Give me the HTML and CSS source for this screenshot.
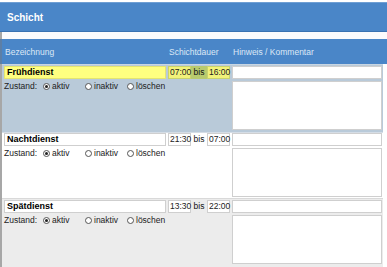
FILE: index.html
```html
<!DOCTYPE html>
<html lang="de">
<head>
  <meta charset="UTF-8">
  <title>Schicht</title>
  <link rel="stylesheet" href="styles.css">
</head>
<body>
  <div class="titlebar">Schicht</div>
  <div class="spacer"></div>

  <div class="colheads">
    <span class="col-name">Bezeichnung</span>
    <span class="col-time">Schichtdauer</span>
    <span class="col-hint">Hinweis / Kommentar</span>
  </div>

  <div class="rows">
    <div class="shift current">
      <div class="name-cell">
        <div class="field name">Frühdienst</div>
        <div class="state">
          <span class="label">Zustand:</span>
          <span class="opt"><span class="radio checked"></span>aktiv</span>
          <span class="opt"><span class="radio"></span>inaktiv</span>
          <span class="opt"><span class="radio"></span>löschen</span>
        </div>
      </div>
      <div class="time-cell">
        <div class="field time">07:00</div>
        <span class="bis">bis</span>
        <div class="field time">16:00</div>
      </div>
      <div class="hint-cell">
        <div class="field hint"></div>
        <div class="field note"></div>
      </div>
    </div>

    <div class="shift plain">
      <div class="name-cell">
        <div class="field name">Nachtdienst</div>
        <div class="state">
          <span class="label">Zustand:</span>
          <span class="opt"><span class="radio checked"></span>aktiv</span>
          <span class="opt"><span class="radio"></span>inaktiv</span>
          <span class="opt"><span class="radio"></span>löschen</span>
        </div>
      </div>
      <div class="time-cell">
        <div class="field time">21:30</div>
        <span class="bis">bis</span>
        <div class="field time">07:00</div>
      </div>
      <div class="hint-cell">
        <div class="field hint"></div>
        <div class="field note"></div>
      </div>
    </div>

    <div class="shift grey">
      <div class="name-cell">
        <div class="field name">Spätdienst</div>
        <div class="state">
          <span class="label">Zustand:</span>
          <span class="opt"><span class="radio checked"></span>aktiv</span>
          <span class="opt"><span class="radio"></span>inaktiv</span>
          <span class="opt"><span class="radio"></span>löschen</span>
        </div>
      </div>
      <div class="time-cell">
        <div class="field time">13:30</div>
        <span class="bis">bis</span>
        <div class="field time">22:00</div>
      </div>
      <div class="hint-cell">
        <div class="field hint"></div>
        <div class="field note"></div>
      </div>
    </div>
  </div>
</body>
</html>
```

FILE: styles.css
```css
body {
  margin: 0;
  background: #fff;
  font-family: "Liberation Sans", Arial, sans-serif;
  font-size: 8.5px;
  color: #111;
  overflow: hidden;
}

.titlebar {
  margin-top: 2px;
  height: 28px;
  line-height: 29px;
  padding-left: 7px;
  background: #4a86c8;
  border-top: 1px solid #6f9fd4;
  border-bottom: 1px solid #3a72b2;
  color: #fff;
  font-weight: bold;
  font-size: 10px;
}

.spacer {
  height: 7px;
  background: #fbfbfd;
  border-left: 2px solid #a7a7a7;
}

.colheads {
  display: flex;
  height: 25px;
  align-items: center;
  background: #4a86c8;
  border-left: 2px solid #5d7fa6;
  color: #dde8f6;
}

.col-name {
  width: 164px;
  padding-left: 3px;
}

.col-time {
  width: 64px;
}

.rows {
  width: 381px;
  border-left: 2px solid #a7a7a7;
}

.shift {
  display: grid;
  grid-template-columns: 162px 62px 150px;
  column-gap: 2px;
  padding: 1px 0 3px 2px;
  height: 63px;
}

.shift.current {
  background: #b9cad9;
  border-top: 1px solid #c9d6e2;
}

.shift.plain {
  background: #fff;
  border-top: 1px solid #d5dde6;
  padding-top: 0;
  height: 62px;
}

.shift.grey {
  background: #ececec;
  border-top: 1px solid #d9d9d9;
  height: 64px;
}

.field {
  box-sizing: border-box;
  border: 1px solid #cfcfcf;
  background: #fff;
  height: 13px;
  line-height: 11px;
  padding: 0 2px;
}

.name {
  font-weight: bold;
  font-size: 9px;
  color: #000;
}

.current .name {
  background: #ffff80;
  border-color: #e4e470;
}

.state {
  display: flex;
  align-items: center;
  margin-top: 1px;
  height: 12px;
  color: #222;
}

.label {
  flex-shrink: 0;
  width: 39px;
}

.opt {
  flex-shrink: 0;
  display: flex;
  align-items: center;
  width: 42px;
}

.radio {
  box-sizing: border-box;
  width: 7px;
  height: 7px;
  border: 1px solid #555;
  border-radius: 50%;
  background: #fff;
  margin-right: 2px;
  position: relative;
}

.radio.checked::after {
  content: "";
  position: absolute;
  left: 1px;
  top: 1px;
  width: 3px;
  height: 3px;
  border-radius: 50%;
  background: #222;
}

.time-cell {
  display: flex;
  align-items: flex-start;
  height: 13px;
}

.current .time-cell {
  background: #b8ca6e;
}

.time {
  width: 23px;
  padding: 0 1px;
  color: #222;
}

.current .time {
  background: #f2f27a;
  border-color: #c9d36b;
}

.bis {
  width: 16px;
  text-align: center;
  line-height: 13px;
}

.hint-cell {
  display: flex;
  flex-direction: column;
  gap: 2px;
}

.note {
  height: 49px;
}
```
